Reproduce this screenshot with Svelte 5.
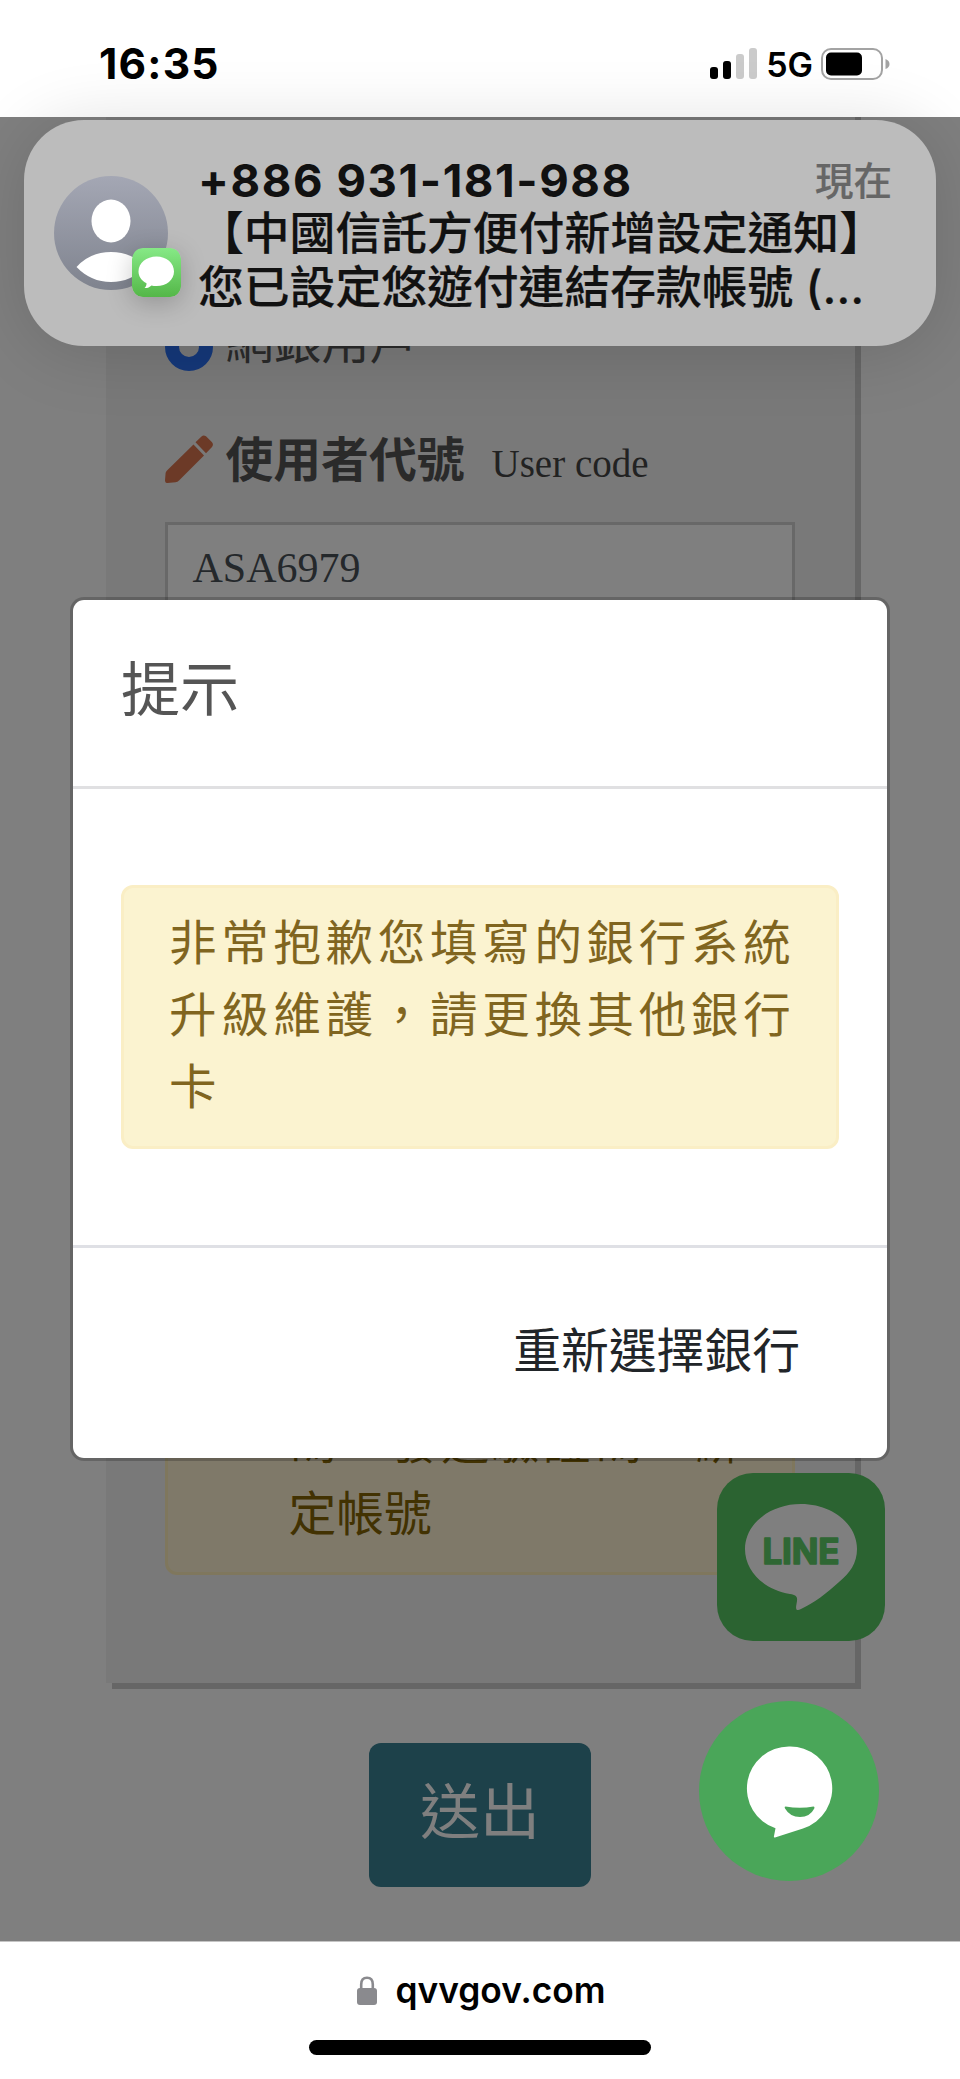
<script>
  let time = '16:35';
  let network = '5G';
  let domain = 'qvvgov.com';

  const signal = [
    { height: 12, on: true },
    { height: 18, on: true },
    { height: 25, on: false },
    { height: 31, on: false }
  ];

  const notification = {
    sender: '+886 931-181-988',
    when: '現在',
    lines: ['【中國信託方便付新增設定通知】', '您已設定悠遊付連結存款帳號 (…']
  };

  let userCode = 'ASA6979';
</script>

<div class="phone">
  <header class="status-bar">
    <span class="time">{time}</span>
    <div class="status-icons">
      <div class="signal">
        {#each signal as bar}
          <span class="bar" class:on={bar.on} style="height: {bar.height}px"></span>
        {/each}
      </div>
      <span class="network">{network}</span>
      <svg class="battery" width="69" height="32" viewBox="0 0 69 32">
        <rect x="1" y="1" width="60" height="30" rx="9" fill="none" stroke="#a3a3a3" stroke-width="2" />
        <rect x="5" y="4.5" width="36" height="23" rx="5" fill="#000" />
        <path d="M64.500 11 Q68.500 12.500 68.500 16 Q68.500 19.500 64.500 21 Z" fill="#a3a3a3" />
      </svg>
    </div>
  </header>

  <main class="page">
    <section class="card">
      <div class="option">
        <span class="radio"></span>
        <span class="option-text">網銀用戶</span>
      </div>

      <div class="field-label">
        <svg class="pencil" width="48" height="48" viewBox="0 0 48 48" fill="#d8744f">
          <path d="M28.500 9.500 L39 20.500 L14 45.500 Q12.500 47 10.500 47.300 L2.500 48 Q0 48.300 0 45.500 L.6 38 Q.8 36.500 2 35.500 Z" />
          <path d="M30.500 7.300 L36.500 1.500 Q38.500 -.5 41 1.300 L46.800 7 Q49 9.500 47 12 L41 18.300 Z" />
        </svg>
        <span class="label-main">使用者代號</span>
        <span class="label-sub">User code</span>
      </div>
      <div class="input">{userCode}</div>

      <div class="warning">
        <p class="warning-text">碼，發送驗證碼，綁定帳號</p>
      </div>
    </section>

    <button class="submit">送出</button>

    <svg class="line-badge" width="168" height="168" viewBox="0 0 168 168">
      <rect width="168" height="168" rx="36" fill="#56c662" />
      <path
        d="M84 31 C115 31 140 51 140 76 C140 90 133 100 122 109 C110 120 97 130 84 136 C79 138.500 78.500 136 79.500 131 C81 124 80 122 73 121 C47 117 28 98 28 76 C28 51 53 31 84 31 Z"
        fill="#fff"
      />
      <text x="84" y="90.500" textLength="77" lengthAdjust="spacing" text-anchor="middle">LINE</text>
    </svg>

    <div class="backdrop">
      <div class="modal">
        <div class="modal-header">提示</div>
        <div class="modal-body">
          <div class="alert">非常抱歉您填寫的銀行系統升級維護，請更換其他銀行卡</div>
        </div>
        <div class="modal-footer">
          <button class="reselect">重新選擇銀行</button>
        </div>
      </div>
    </div>

    <svg class="chat" width="180" height="180" viewBox="0 0 180 180">
      <circle cx="90" cy="90" r="90" fill="#4aa659" />
      <path
        d="M90 45.500 A42 42 0 0 1 104 127.500 L76 136.500 Q74.500 137 75 135 L76.500 127.300 A42 42 0 0 1 90 45.500 Z"
        fill="#fff"
      />
      <path d="M86.500 105.500 Q101 108 114.500 105.500 Q116 105.500 115.300 107.500 Q111 116 101 116 Q91 116 86 107.500 Q85 105.500 86.500 105.500 Z" fill="#4aa659" />
    </svg>
  </main>

  <footer class="url-bar">
    <div class="url">
      <svg width="20" height="29" viewBox="0 0 20 29">
        <path d="M4.200 13 V8.500 Q4.200 1.800 10 1.800 Q15.800 1.800 15.800 8.500 V13" fill="none" stroke="#8a8a8e" stroke-width="2.600" />
        <rect x="0" y="12" width="20" height="17" rx="3" fill="#8a8a8e" />
      </svg>
      <span>{domain}</span>
    </div>
    <div class="home-indicator"></div>
  </footer>

  <aside class="notification">
    <div class="avatar">
      <svg width="114" height="114" viewBox="0 0 114 114">
        <defs>
          <linearGradient id="avatar-bg" x1="0" y1="0" x2="0" y2="1">
            <stop offset="0" stop-color="#a4a7b4" />
            <stop offset="1" stop-color="#7f838e" />
          </linearGradient>
        </defs>
        <circle cx="57" cy="57" r="57" fill="url(#avatar-bg)" />
        <ellipse cx="57" cy="45" rx="19.500" ry="21.500" fill="#fff" />
        <path d="M22.500 91 Q36 76 57 76 Q78 76 91.500 91 Q77 106 57 106 Q37 106 22.500 91 Z" fill="#fff" />
      </svg>
      <svg class="app-badge" width="49" height="49" viewBox="0 0 49 49">
        <defs>
          <linearGradient id="badge-bg" x1="0" y1="0" x2="0" y2="1">
            <stop offset="0" stop-color="#86e986" />
            <stop offset="1" stop-color="#54b748" />
          </linearGradient>
        </defs>
        <rect width="49" height="49" rx="11" fill="url(#badge-bg)" />
        <path d="M24.500 8.500 C34.500 8.500 42 15 42 23.500 C42 32 34.500 38 24.500 38 C22.500 38 21 37.800 19.500 37.400 C17.500 39.300 15 40.300 12.500 40 C14 38.800 14.600 37 14.500 35.200 C9.500 32.500 6.500 28.500 6.500 23.500 C6.500 15 14.500 8.500 24.500 8.500 Z" fill="#fff" />
      </svg>
    </div>
    <div class="message">
      <div class="message-head">
        <span class="sender">{notification.sender}</span>
        <span class="when">{notification.when}</span>
      </div>
      {#each notification.lines as line}
        <div class="message-line">{line}</div>
      {/each}
    </div>
  </aside>
</div>

<style>
  :global(body) {
    margin: 0;
    background: #fff;
  }

  .phone {
    position: relative;
    display: flex;
    flex-direction: column;
    width: 960px;
    height: 2079px;
    overflow: hidden;
    background: #fff;
    font-family: Inter, 'Noto Sans CJK TC', sans-serif;
  }

  button {
    margin: 0;
    padding: 0;
    border: none;
    background: none;
    font-family: inherit;
  }

  /* Status bar */
  .status-bar {
    display: flex;
    align-items: center;
    justify-content: space-between;
    box-sizing: border-box;
    height: 117px;
    padding: 10px 70px 0 99px;
    flex-shrink: 0;
    color: #000;
  }

  .time {
    font-size: 42.500px;
    font-weight: 750;
    letter-spacing: 1.200px;
  }

  .status-icons {
    display: flex;
    align-items: center;
  }

  .signal {
    display: flex;
    align-items: flex-end;
    gap: 4.500px;
    height: 31px;
  }

  .bar {
    width: 8.500px;
    border-radius: 3px;
    background: #cbcbcb;
  }

  .bar.on {
    background: #000;
  }

  .network {
    margin: 3px 8px 0 9px;
    font-size: 34px;
    font-weight: 600;
    line-height: 34px;
  }

  /* Page behind the dialog */
  .page {
    position: relative;
    display: flex;
    flex-direction: column;
    align-items: center;
    height: 1824px;
    flex-shrink: 0;
    overflow: hidden;
    background: #fff;
    font-family: 'Liberation Serif', 'Noto Sans CJK TC', serif;
  }

  .card {
    display: flex;
    flex-direction: column;
    box-sizing: border-box;
    width: 749px;
    height: 1586px;
    margin-top: -20px;
    padding: 220px 60px 108px 59px;
    flex-shrink: 0;
    background: #f2f2f2;
    box-shadow: 6px 6px 0 #cdcdcd;
  }

  .option {
    display: flex;
    align-items: center;
    gap: 13px;
    height: 60px;
    font-size: 48px;
    line-height: 60px;
    color: #555;
  }

  .radio {
    box-sizing: border-box;
    width: 48px;
    height: 48px;
    border: 14px solid #2a71f5;
    border-radius: 50%;
  }

  .option-text {
    margin-top: -8px;
  }

  .field-label {
    display: flex;
    align-items: center;
    height: 60px;
    margin-top: 52px;
    color: #555;
  }

  .label-main {
    margin: 4px 0 0 13px;
    font-size: 47.800px;
    font-weight: 700;
    line-height: 60px;
  }

  .label-sub {
    margin: 9px 0 0 27px;
    font-size: 39px;
    color: #444;
  }

  .input {
    box-sizing: border-box;
    height: 115px;
    margin-top: 33px;
    padding-left: 25px;
    border: 3px solid #d0d0d0;
    background: #fff;
    font-size: 42px;
    line-height: 86px;
    color: #495057;
  }

  .warning {
    box-sizing: border-box;
    margin-top: auto;
    padding: 24px 48px 21px 121px;
    border: 3px solid #ffeeba;
    border-radius: 12px;
    background: #fff3d2;
  }

  .warning-text {
    margin: 0;
    font-size: 47.800px;
    line-height: 72px;
    text-align: justify;
    color: #856404;
  }

  .submit {
    width: 222px;
    height: 144px;
    margin-top: 60px;
    padding-bottom: 15px;
    flex-shrink: 0;
    border-radius: 12px;
    background: #3a8294;
    font-size: 60px;
    color: #fff;
  }

  .line-badge {
    position: absolute;
    top: 1356px;
    left: 717px;
  }

  .line-badge text {
    fill: #5fcf69;
    stroke: #5fcf69;
    stroke-width: 1.500px;
    stroke-linejoin: round;
    font-family: Inter, sans-serif;
    font-size: 35px;
    font-weight: 700;
  }

  /* Dialog */
  .backdrop {
    position: absolute;
    inset: 0;
    display: flex;
    align-items: center;
    justify-content: center;
    background: rgba(0, 0, 0, 0.5);
  }

  .modal {
    display: flex;
    flex-direction: column;
    width: 814px;
    height: 858px;
    border: 3px solid rgba(0, 0, 0, 0.2);
    border-radius: 14px;
    background: #fff;
    background-clip: padding-box;
    font-family: 'Noto Sans CJK TC', sans-serif;
  }

  .modal-header {
    box-sizing: border-box;
    height: 189px;
    padding: 42px 48px 0;
    border-bottom: 3px solid #e0e0e2;
    font-size: 59px;
    line-height: 87px;
    color: #555;
  }

  .modal-body {
    flex: 1;
    padding: 96px 48px 0;
  }

  .alert {
    box-sizing: border-box;
    height: 264px;
    padding: 16px 0 0 45px;
    border: 3px solid #faeec5;
    border-radius: 12px;
    background: #fbf3d0;
    font-size: 47.500px;
    line-height: 72px;
    letter-spacing: 4.700px;
    color: #80651f;
  }

  .modal-footer {
    display: flex;
    align-items: center;
    justify-content: flex-end;
    box-sizing: border-box;
    height: 213px;
    padding: 0 87px 10px 0;
    border-top: 3px solid #dfe0e5;
  }

  .reselect {
    font-size: 47.800px;
    line-height: 72px;
    color: #212529;
  }

  .chat {
    position: absolute;
    top: 1584px;
    left: 699px;
  }

  /* Browser bar */
  .url-bar {
    display: flex;
    flex-direction: column;
    align-items: center;
    box-sizing: border-box;
    height: 138px;
    padding-top: 27px;
    border-top: 1px solid #c4c4c4;
    background: #fff;
  }

  .url {
    display: flex;
    align-items: center;
    gap: 18px;
    height: 42px;
    margin-left: 3px;
    font-size: 35.300px;
    font-weight: 600;
    color: #000;
  }

  .home-indicator {
    width: 342px;
    height: 15px;
    margin-top: 29px;
    border-radius: 8px;
    background: #000;
  }

  /* Notification banner */
  .notification {
    position: absolute;
    top: 120px;
    left: 24px;
    display: flex;
    box-sizing: border-box;
    width: 912px;
    height: 226px;
    padding: 34px 44px 0 30px;
    border-radius: 60px;
    background: #bcbcbc;
    box-shadow: 0 6px 70px rgba(0, 0, 0, 0.14);
  }

  .avatar {
    position: relative;
    width: 114px;
    height: 114px;
    margin: 22px 30px 0 0;
    flex-shrink: 0;
  }

  .app-badge {
    position: absolute;
    top: 72px;
    left: 78px;
    border-radius: 11px;
    box-shadow: 0 6px 26px rgba(0, 0, 0, 0.22);
  }

  .message {
    flex: 1;
    color: #111;
  }

  .message-head {
    display: flex;
    align-items: center;
    justify-content: space-between;
    height: 53px;
    line-height: 50px;
  }

  .sender {
    font-size: 45.500px;
    font-weight: 750;
    letter-spacing: 1.600px;
  }

  .when {
    font-size: 38.500px;
    font-weight: 500;
    color: #666;
    -webkit-text-stroke: 0.200px #666;
  }

  .message-line {
    font-size: 45.800px;
    font-weight: 500;
    line-height: 54px;
    white-space: nowrap;
    -webkit-text-stroke: 0.200px #111;
  }
</style>
